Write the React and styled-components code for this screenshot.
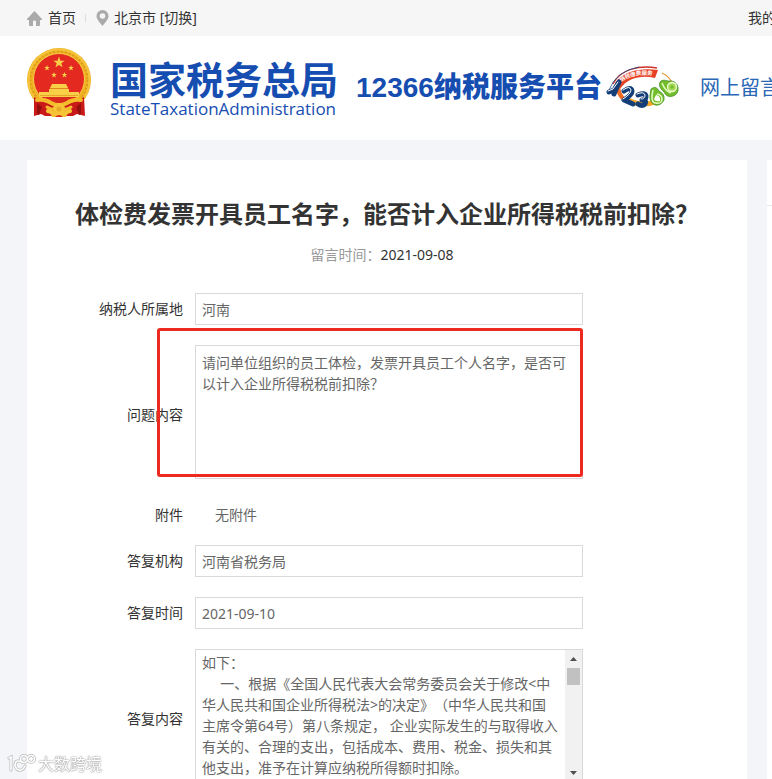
import React from "react";
import styled, { createGlobalStyle } from "styled-components";

const GlobalStyle = createGlobalStyle`
  *, *::before, *::after { box-sizing: border-box; }
  html { scrollbar-width: none; }
  body {
    margin: 0;
    background: #f3f5f8;
    color: #333;
    font: 14px/20px "Noto Sans", "Noto Sans CJK SC", sans-serif;
    text-spacing-trim: space-all;
    overflow-x: hidden;
  }
  h1, p { margin: 0; }
  a { color: inherit; text-decoration: none; }
  input, textarea, button { font: inherit; color: inherit; text-spacing-trim: inherit; }
`;

const Page = styled.div`
  overflow: hidden;
`;

const TopBar = styled.nav`
  display: flex;
  align-items: center;
  height: 36px;
  padding-left: 27px;
  background: #f6f6f6;
  white-space: nowrap;
`;

const TopLink = styled.a`
  display: flex;
  align-items: center;
  gap: 6px;
`;

const Divider = styled.span`
  width: 1px;
  height: 8px;
  margin: 0 10px 0 9px;
  background: #ddd;
`;

const City = styled.span`
  display: flex;
  align-items: center;
  gap: 5px;
`;

const TopRight = styled.a`
  width: 24px;
  margin-left: auto;
`;

const Header = styled.header`
  display: flex;
  align-items: center;
  height: 104px;
  padding-left: 27px;
  background: #fff;
  color: #164db1;
  white-space: nowrap;
`;

const Brand = styled.a`
  display: flex;
  align-items: center;
  gap: 18px;
  flex: none;
  width: 329px;
  padding-bottom: 10px;
`;

const BrandText = styled.span`
  display: flex;
  flex-direction: column;
  gap: 2px;
  padding-top: 12px;
`;

const BrandName = styled.span`
  font: 700 38px/38px "Noto Sans CJK SC", sans-serif;
`;

const BrandSub = styled.span`
  font: 400 17px/20px "Open Sans", sans-serif;
`;

const Platform = styled.span`
  flex: none;
  width: 250px;
  font: 700 28px/36px "Liberation Sans", "Noto Sans CJK SC", sans-serif;
`;

const PlatformName = styled.span`
  font-weight: 900;
`;

const HeaderLink = styled.a`
  width: 72px;
  margin-left: auto;
  color: #2a67b5;
  font-size: 20px;
  line-height: 28px;
`;

const Main = styled.main`
  display: grid;
  grid-template-columns: minmax(0, 1fr) 5px;
  gap: 20px;
  padding: 20px 0 0 27px;
`;

const Card = styled.article`
  padding: 36px 0 20px;
  background: #fff;
`;

const Aside = styled.aside`
  background: #fff;
`;

const AsideHead = styled.div`
  height: 46px;
  border-bottom: 1px solid #e8e8e8;
`;

const Title = styled.h1`
  font-size: 24px;
  line-height: 36px;
  text-align: center;
`;

const Meta = styled.p`
  margin: 13px 0 28px;
  padding-right: 10px;
  text-align: center;
`;

const MetaLabel = styled.span`
  color: #999;
`;

const Row = styled.div`
  display: grid;
  grid-template-columns: 156px minmax(0, 388px);
  column-gap: 12px;
  align-items: center;
  margin-bottom: ${(p) => (p.$tight ? "14px" : "20px")};
`;

const Label = styled.label`
  padding-top: ${(p) => (p.$tall ? "5px" : "0")};
  text-align: right;
`;

const Field = styled.div`
  position: relative;
  display: flex;
  color: #666;
`;

const TextInput = styled.input`
  width: 100%;
  height: 32px;
  padding: 0 6px;
  border: 1px solid #d9d9d9;
  background: #fff;
  outline: none;
`;

const PlainValue = styled.output`
  padding-left: 20px;
  line-height: 32px;
`;

const AreaFrame = styled.div`
  display: flex;
  width: 100%;
  height: 134px;
  border: 1px solid #d9d9d9;
`;

const TextArea = styled.textarea`
  flex: 1;
  min-width: 0;
  padding: ${(p) => (p.$inset ? "6px" : "2px 6px")};
  border: 0;
  background: #fff;
  line-height: 21px;
  white-space: pre;
  overflow: hidden;
  resize: none;
  outline: none;
`;

const ScrollBar = styled.div`
  display: flex;
  flex-direction: column;
  width: 17px;
  background: #f1f1f1;
`;

const ScrollButton = styled.button`
  display: grid;
  place-items: center;
  width: 17px;
  height: 18px;
  padding: 0;
  border: 0;
  background: none;
`;

const Thumb = styled.div`
  width: 13px;
  height: 17px;
  margin: 0 2px auto;
  background: #c1c1c1;
`;

const Highlight = styled.div`
  position: absolute;
  inset: -17px 0 2px -38px;
  border: 3px solid #ee2a20;
  border-radius: 3px;
  pointer-events: none;
`;

const Watermark = styled.div`
  position: fixed;
  left: 7px;
  bottom: 4px;
  display: flex;
  align-items: center;
  gap: 2px;
  color: #fff;
  font-size: 16px;
  line-height: 22px;
  text-shadow: 0 0 1px #999, 0 0 1px #999, 0 0 2px #aaa;
`;

const HomeIcon = () => (
  <svg width="15" height="15" viewBox="0 0 15 15" fill="#aaa" aria-hidden="true">
    <path d="M7.5 0 15 8v1h-2v5q0 1-1 1H9v-4.500q0-1-1.500-1t-1.500 1V15H3q-1 0-1-1V9H0V8z" />
  </svg>
);

const PinIcon = () => (
  <svg width="13" height="16" viewBox="0 0 13 16" aria-hidden="true">
    <path
      fill="#aaa"
      fillRule="evenodd"
      d="M6.500 0a6 6 0 0 1 6 6c0 3.500-3.500 6.500-6 10-2.500-3.500-6-6.500-6-10a6 6 0 0 1 6-6zm0 3.200a2.800 2.800 0 1 0 0 5.600 2.800 2.800 0 0 0 0-5.600z"
    />
  </svg>
);

const STAR = "M0-1 .24-.31.95-.31.38.12.59.81 0 .4-.59.81-.38.12-.95-.31-.24-.31z";

const Emblem = () => (
  <svg width="65" height="70" viewBox="0 0 65 70" aria-hidden="true">
    <circle cx="32" cy="32" r="32" fill="#efb324" />
    <circle cx="32" cy="32" r="28.500" fill="none" stroke="#dc9a1c" strokeWidth="2" strokeDasharray="2 2" />
    <circle cx="32" cy="32" r="30.500" fill="none" stroke="#f5c43c" strokeWidth="2" />
    <circle cx="32" cy="31" r="25.500" fill="#e42a20" stroke="#f8cb45" />
    <g fill="#f9cf48">
      <path d={STAR} transform="translate(32 14.500) scale(6)" />
      <path d={STAR} transform="translate(20 20) scale(3)" />
      <path d={STAR} transform="translate(44 20) scale(3)" />
      <path d={STAR} transform="translate(27 27) scale(3)" />
      <path d={STAR} transform="translate(37.500 27) scale(3)" />
      <path d="M25 36h14l2 4H23zM22 41h20v3H22zM12 44h40v5H12z" />
    </g>
    <path stroke="#e09a22" strokeWidth=".8" d="M23 40.500h18M13 47.500h38" />
    <path fill="#c91919" d="M7 49 17 54 32 60 47 54 57 49 58 68 50 66 46 68H18l-4-2-7 2z" />
    <path fill="#96100f" d="M10 55l5 4-3 8-2-1zM54 55l-5 4 3 8 2-1z" />
    <path fill="#d92a1d" d="M18 49h28q-6 3-8 5-6 5-12 0-3-4-8-5z" />
    <g fill="none" stroke="#f4bb2b" strokeWidth="4" strokeLinecap="round">
      <path d="M10 52q9-1 14 3 8 4 8 0 0 4 8 0 5-4 14-3" />
      <path strokeWidth="3" d="M20 59q6 4 12 1 6 3 12-1" />
    </g>
    <circle cx="32" cy="61" r="6" fill="#f6c436" />
    <circle cx="32" cy="61" r="2.500" fill="#e8a92a" />
    <path fill="#f6c436" d="M20 61q5 0 8 3h8q3-3 8-3 2 2 0 4-4 0-5 4H25q-1-4-5-4-2-2 0-4z" />
    <path fill="#d92a1d" d="M28 69q4-4 8 0z" />
  </svg>
);

const Mascot = () => (
  <svg width="74" height="44" viewBox="0 0 74 44" aria-hidden="true">
    <path fill="none" stroke="#cf3028" strokeWidth="1.300" d="M7 18C14 3 34-1 51 2" />
    <path fill="none" stroke="#194985" strokeWidth=".8" d="M3 24Q10 5 33 1" />
    <path fill="#e64125" d="M9 17C19 4 36 2 52 4l-3 8C37 9 22 11 14 23z" />
    <path fill="none" stroke="#ee6b24" strokeWidth="4" d="M12 18Q11 34 29 38" />
    <path fill="none" stroke="#f5a629" strokeWidth="2.500" d="M21 32q17 9 31 1M24 37q14 5 28-1" />
    <path fill="none" stroke="#e89834" strokeWidth="1.200" d="M56 7q8 4 10 10" />
    <defs>
      <path id="mascot-ribbon" d="M15 16Q29 6 51 10" />
    </defs>
    <text fill="#fff" fontSize="5.500" fontWeight="700" fontFamily="Noto Sans CJK SC, sans-serif">
      <textPath href="#mascot-ribbon">纳税缴费服务</textPath>
    </text>
    <g fill="none" strokeLinecap="round" strokeLinejoin="round">
      <g stroke="#143e78" strokeWidth="5">
        <path d="M3 26 8 24 13 16 8 28" />
        <path d="M18 25q7-5 8 0 0 4-8 9l9 4" />
        <path d="M32 29q7-3 8 1 0 4-4 4 5 0 3 4-3 3-7 0" />
      </g>
      <g stroke="#fff" strokeWidth="1">
        <path d="M2 25 7 23 12 16" />
        <path d="M17 24q7-5 8 0 0 4-8 9" />
        <path d="M31 28q7-3 8 1 0 4-4 4" />
      </g>
    </g>
    <g fill="#74bd2d" stroke="#438f28" strokeWidth=".8">
      <path d="M45 23q5-4 8 2 6 3 5 9-3 6-9 5-6-3-5-10z" />
      <path d="M54 16q2-3 8-1 8-1 10 6 1 7-5 9-6 2-9-4-6-5-4-10z" />
    </g>
    <path fill="none" stroke="#e4ffc0" strokeWidth="1.500" d="M47 24q-3 13 3 13 6 1 6-4 0-4-5-5" />
    <circle cx="66" cy="21" r="4.500" fill="#a9d95b" stroke="#efffd3" strokeWidth="1.300" />
    <circle cx="66" cy="21" r="1.800" fill="#74bd2d" />
    <path fill="none" stroke="#e4ffc0" strokeWidth="1.500" d="M56 17q3 8 9 10" />
    <path fill="#fff" d="M50 29q5 1 4 6-5 1-6-2z" />
  </svg>
);

const Arrow = ({ down }) => (
  <svg width="7" height="4" viewBox="0 0 7 4" aria-hidden="true">
    <path fill="#505050" d={down ? "M0 0h7L3.500 4z" : "M0 4h7L3.500 0z"} />
  </svg>
);

const WatermarkLogo = () => (
  <svg width="29" height="20" viewBox="0 0 29 20" fill="none" aria-hidden="true">
    {["#bbb", "#fff"].map((color, i) => (
      <g key={color} stroke={color} strokeWidth={i ? 1.6 : 3} strokeLinecap="round">
        <path d="M2 4 4 3V16M15 8Q8 5 8 11q1 6 6 5 3-1 4-4" />
        <circle cx="17" cy="5" r="3.500" />
        <circle cx="24" cy="5" r="3.500" />
      </g>
    ))}
  </svg>
);

const QUESTION = `请问单位组织的员工体检，发票开具员工个人名字，是否可
以计入企业所得税税前扣除？`;

const ANSWER = `如下：
     一、根据《全国人民代表大会常务委员会关于修改<中
华人民共和国企业所得税法>的决定》（中华人民共和国
主席令第64号）第八条规定， 企业实际发生的与取得收入
有关的、合理的支出，包括成本、费用、税金、损失和其
他支出，准予在计算应纳税所得额时扣除。`;

const InputRow = ({ id, label, value }) => (
  <Row>
    <Label htmlFor={id}>{label}</Label>
    <Field>
      <TextInput id={id} value={value} readOnly />
    </Field>
  </Row>
);

export default function App() {
  return (
    <Page>
      <GlobalStyle />
      <TopBar>
        <TopLink href="#">
          <HomeIcon />
          首页
        </TopLink>
        <Divider />
        <City>
          <PinIcon />
          <span>
            北京市 <a href="#">[切换]</a>
          </span>
        </City>
        <TopRight href="#">我的</TopRight>
      </TopBar>
      <Header>
        <Brand href="#">
          <Emblem />
          <BrandText>
            <BrandName>国家税务总局</BrandName>
            <BrandSub>StateTaxationAdministration</BrandSub>
          </BrandText>
        </Brand>
        <Platform>
          12366<PlatformName>纳税服务平台</PlatformName>
        </Platform>
        <Mascot />
        <HeaderLink href="#">网上留言</HeaderLink>
      </Header>
      <Main>
        <Card>
          <Title>体检费发票开具员工名字，能否计入企业所得税税前扣除？</Title>
          <Meta>
            <MetaLabel>留言时间：</MetaLabel>2021-09-08
          </Meta>
          <InputRow id="region" label="纳税人所属地" value="河南" />
          <Row>
            <Label htmlFor="question" $tall>问题内容</Label>
            <Field>
              <AreaFrame>
                <TextArea id="question" value={QUESTION} $inset readOnly />
              </AreaFrame>
              <Highlight />
            </Field>
          </Row>
          <Row $tight>
            <Label htmlFor="attachment">附件</Label>
            <Field>
              <PlainValue id="attachment">无附件</PlainValue>
            </Field>
          </Row>
          <InputRow id="office" label="答复机构" value="河南省税务局" />
          <InputRow id="replied" label="答复时间" value="2021-09-10" />
          <Row>
            <Label htmlFor="answer" $tall>答复内容</Label>
            <Field>
              <AreaFrame>
                <TextArea id="answer" value={ANSWER} readOnly />
                <ScrollBar>
                  <ScrollButton type="button" aria-label="向上滚动">
                    <Arrow />
                  </ScrollButton>
                  <Thumb />
                  <ScrollButton type="button" aria-label="向下滚动">
                    <Arrow down />
                  </ScrollButton>
                </ScrollBar>
              </AreaFrame>
            </Field>
          </Row>
        </Card>
        <Aside>
          <AsideHead />
        </Aside>
      </Main>
      <Watermark>
        <WatermarkLogo />
        大数跨境
      </Watermark>
    </Page>
  );
}
